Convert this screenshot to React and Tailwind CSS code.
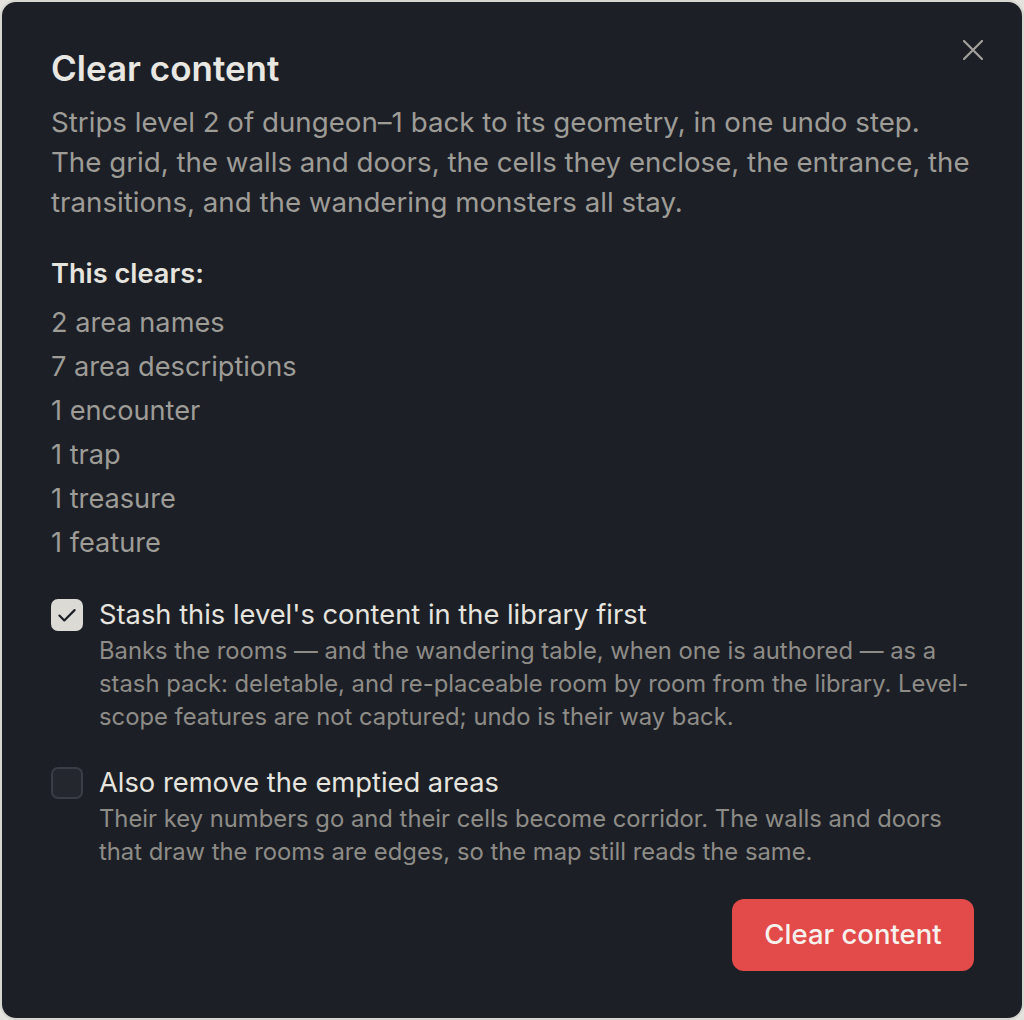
import { useState } from 'react';

const clears = [
  '2 area names',
  '7 area descriptions',
  '1 encounter',
  '1 trap',
  '1 treasure',
  '1 feature',
];

const Check = ({ checked, onClick }) => (
  <button
    onClick={onClick}
    className={`mt-[2px] flex h-[32px] w-[32px] shrink-0 items-center justify-center rounded-[7px] border-2 ${
      checked ? 'border-[#dcdad5] bg-[#dcdad5]' : 'border-[#3a3d45] bg-[#24272e]'
    }`}
  >
    {checked && (
      <svg width="26" height="26" viewBox="0 0 24 24" fill="none" stroke="#1c1f26" strokeWidth="2" strokeLinecap="round" strokeLinejoin="round">
        <path d="M5 12.5l4.5 4.5L19 7.5" />
      </svg>
    )}
  </button>
);

export default function App() {
  const [stash, setStash] = useState(true);
  const [remove, setRemove] = useState(false);

  return (
    <div className="h-[1020px] w-[1024px] bg-[#e4e3de]" style={{ fontFamily: 'Inter, "Noto Sans", sans-serif' }}>
      <div className="relative flex h-full w-full flex-col rounded-[16px] border-2 border-[#d6d5d0] bg-[#1c1f26] pl-[49px] pr-[48px] pt-[46px]">
        <button className="absolute right-[39px] top-[38px] text-[#a3a19c]">
          <svg width="20" height="20" viewBox="0 0 20 20" fill="none" stroke="currentColor" strokeWidth="2.2" strokeLinecap="round">
            <path d="M1 1l18 18M19 1L1 19" />
          </svg>
        </button>

        <h1 className="text-[35px] font-semibold leading-[40px] text-[#e9e7e2]">Clear content</h1>
        <p className="mt-[14px] text-[27.7px] leading-[40px] text-[#9e9c97]">
          Strips level 2 of dungeon–1 back to its geometry, in one undo step. The grid, the walls and doors, the cells they enclose, the entrance, the transitions, and the wandering monsters all stay.
        </p>

        <h2 className="mt-[34px] text-[27.2px] font-semibold leading-[36px] text-[#e6e4df]">This clears:</h2>
        <ul className="mt-[9px] text-[27.2px] leading-[44px] text-[#9e9c97]">
          {clears.map(c => (
            <li key={c}>{c}</li>
          ))}
        </ul>

        <div className="mt-[32px] flex gap-[16px]">
          <Check checked={stash} onClick={() => setStash(v => !v)} />
          <div>
            <div className="text-[27.3px] leading-[36px] text-[#e6e4df]">Stash this level's content in the library first</div>
            <p className="mt-[1px] text-[23.8px] leading-[33px] text-[#8e8c87]">
              Banks the rooms — and the wandering table, when one is authored — as a stash pack: deletable, and re-placeable room by room from the library. Level-scope features are not captured; undo is their way back.
            </p>
          </div>
        </div>

        <div className="mt-[32px] flex gap-[16px]">
          <Check checked={remove} onClick={() => setRemove(v => !v)} />
          <div>
            <div className="text-[27.3px] leading-[36px] text-[#e6e4df]">Also remove the emptied areas</div>
            <p className="mt-[1px] text-[23.8px] leading-[33px] text-[#8e8c87]">
              Their key numbers go and their cells become corridor. The walls and doors that draw the rooms are edges, so the map still reads the same.
            </p>
          </div>
        </div>

        <div className="mt-[31px] flex justify-end">
          <button className="h-[72px] w-[242px] rounded-[12px] bg-[#e34b4a] text-[27.5px] font-medium text-[#f6f2ee]">
            Clear content
          </button>
        </div>
      </div>
    </div>
  );
}
